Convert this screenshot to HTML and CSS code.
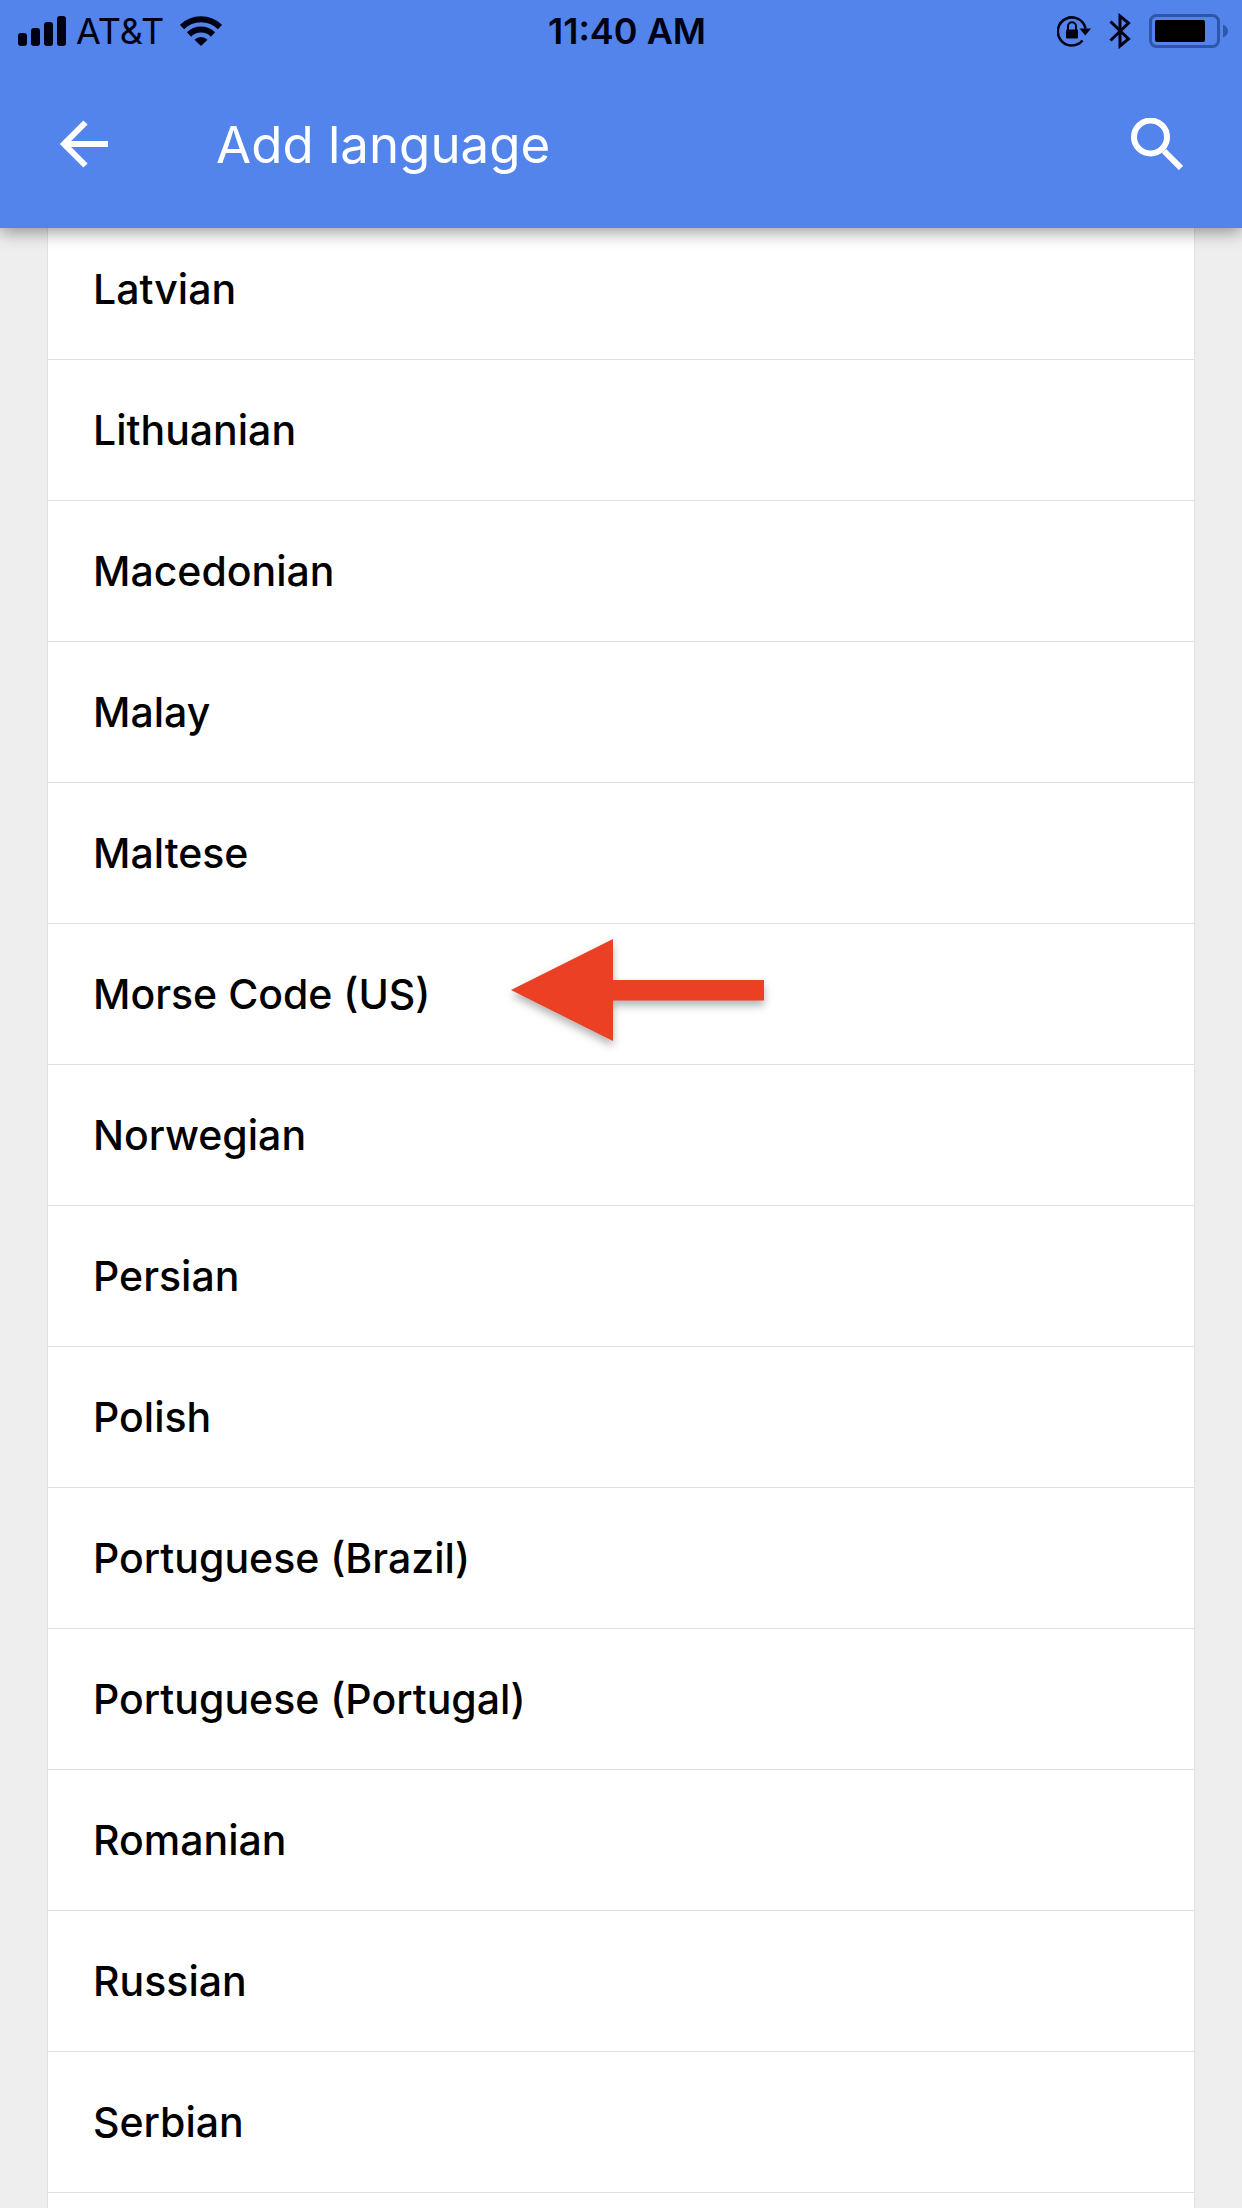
FILE: index.html
```html
<!DOCTYPE html>
<html lang="en">
<head>
<meta charset="utf-8">
<meta name="viewport" content="width=device-width, initial-scale=1">
<title>Add language</title>
<link rel="stylesheet" href="styles.css">
</head>
<body>
<div class="screen">
  <header class="header">
    <div class="status">
      <div class="status-left">
        <svg class="signal" width="48" height="30" viewBox="0 0 48 30" role="img" aria-label="Signal strength">
          <rect x="0" y="17" width="9" height="13" rx="3"/>
          <rect x="13" y="12" width="9" height="18" rx="3"/>
          <rect x="26" y="6" width="9" height="24" rx="3"/>
          <rect x="39" y="0" width="9" height="30" rx="3"/>
        </svg>
        <span class="carrier">AT&amp;T</span>
        <svg class="wifi" width="42" height="30" viewBox="0 0 42 30" role="img" aria-label="Wi-Fi">
          <g fill="none" stroke="#000014" stroke-width="6">
            <path d="M2 11A27 27 0 0 1 40 11"/>
            <path d="M9 18.5A17.2 17.2 0 0 1 33 18.5"/>
          </g>
          <path d="M14.500 23.700A9.200 9.200 0 0 1 27.500 23.700L21 30Z"/>
        </svg>
      </div>
      <span class="time">11:40 AM</span>
      <div class="status-right">
        <svg class="lock" width="34" height="32" viewBox="0 0 34 32" role="img" aria-label="Rotation locked">
          <path d="M25.500 25.500A14 14 0 1 1 28.500 13.500" fill="none" stroke="#000014" stroke-width="2.600"/>
          <path d="M22.500 13.500H34L28.300 20.500Z"/>
          <rect x="9" y="14.500" width="12" height="9" rx="1"/>
          <path d="M11 15V11.200a4 4 0 0 1 8 0V15" fill="none" stroke="#000014" stroke-width="2"/>
        </svg>
        <svg class="bluetooth" width="22" height="36" viewBox="0 0 22 36" role="img" aria-label="Bluetooth">
          <path d="M1.500 8.500L19.500 26L11 33V3L19.500 10L1.500 27.500" fill="none" stroke="#000014" stroke-width="3"/>
        </svg>
        <svg class="battery" width="79" height="34" viewBox="0 0 79 34" role="img" aria-label="Battery">
          <rect x="1.500" y="1.500" width="68" height="31" rx="6" fill="none" stroke="#2f57a8" stroke-width="3"/>
          <path d="M74 10.500Q79 13 79 17T74 23.500Z" fill="#2f57a8"/>
          <rect x="6" y="6" width="50" height="22" rx="2" fill="#000"/>
        </svg>
      </div>
    </div>
    <div class="toolbar">
      <button class="icon-button" type="button" aria-label="Back">
        <svg width="48" height="48" viewBox="0 0 48 48" fill="none" stroke="#fff" stroke-width="6">
          <path d="M48 24H5M25.500 2.500L4 24L25.500 45.500"/>
        </svg>
      </button>
      <h1 class="title">Add language</h1>
      <button class="icon-button" type="button" aria-label="Search">
        <svg width="52" height="52" viewBox="0 0 52 52" fill="none" stroke="#fff" stroke-width="6">
          <circle cx="19.500" cy="19" r="16.500"/>
          <path d="M33 33L50 50"/>
        </svg>
      </button>
    </div>
  </header>
  <main class="content">
    <ul class="languages">
      <li><button class="language" type="button">Latvian</button></li>
      <li><button class="language" type="button">Lithuanian</button></li>
      <li><button class="language" type="button">Macedonian</button></li>
      <li><button class="language" type="button">Malay</button></li>
      <li><button class="language" type="button">Maltese</button></li>
      <li class="marked">
        <button class="language" type="button">Morse Code (US)</button>
        <svg class="pointer" width="254" height="104" viewBox="0 0 254 104" aria-hidden="true">
          <path d="M0 52L102 1V42H253V62.500H102V103Z" fill="#ec4024"/>
        </svg>
      </li>
      <li><button class="language" type="button">Norwegian</button></li>
      <li><button class="language" type="button">Persian</button></li>
      <li><button class="language" type="button">Polish</button></li>
      <li><button class="language" type="button">Portuguese (Brazil)</button></li>
      <li><button class="language" type="button">Portuguese (Portugal)</button></li>
      <li><button class="language" type="button">Romanian</button></li>
      <li><button class="language" type="button">Russian</button></li>
      <li><button class="language" type="button">Serbian</button></li>
    </ul>
  </main>
</div>
</body>
</html>
```
FILE: styles.css
```css
* {
  box-sizing: border-box;
}

body {
  margin: 0;
  background: #eee;
  color: #000;
  font-family: Inter, Roboto, "Liberation Sans", sans-serif;
}

button {
  margin: 0;
  padding: 0;
  border: 0;
  background: none;
  color: inherit;
  font: inherit;
  cursor: pointer;
}

svg {
  display: block;
  flex: none;
}

.screen {
  display: flex;
  flex-direction: column;
  height: 100vh;
  overflow: hidden;
}

.header {
  position: relative;
  z-index: 1;
  flex: none;
  background: #5284ec;
  box-shadow: 0 4px 16px rgba(0, 0, 0, 0.4);
}

.status {
  display: grid;
  grid-template-columns: 1fr auto 1fr;
  align-items: center;
  height: 62px;
  padding: 0 14px 0 18px;
  color: #000014;
  fill: #000014;
  font-size: 36px;
}

.status-left,
.status-right {
  display: flex;
  align-items: center;
}

.carrier {
  margin: 0 16px 0 10px;
}

.time {
  padding-left: 8px;
  font-weight: 600;
}

.status-right {
  justify-content: flex-end;
  gap: 18px;
}

.toolbar {
  display: flex;
  align-items: center;
  height: 166px;
  padding: 0 59px 2px 60px;
}

.icon-button {
  flex: none;
}

.title {
  flex: 1;
  margin: 0 0 0 108px;
  color: #fff;
  font-size: 51px;
  font-weight: 400;
}

.content {
  display: flex;
  flex: 1;
  min-height: 0;
  padding: 0 47px;
}

.languages {
  flex: 1;
  margin: -9px 0 0;
  padding: 0;
  border: solid #e0e0e0;
  border-width: 0 1px;
  background: #fff;
  list-style: none;
}

.language {
  display: block;
  width: 100%;
  height: 141px;
  padding: 0 45px;
  border-bottom: 1px solid #e0e0e0;
  font-size: 41px;
  font-weight: 500;
  text-align: left;
}

.marked {
  position: relative;
}

.pointer {
  position: absolute;
  top: 14px;
  left: 463px;
  overflow: visible;
  filter: drop-shadow(0 5px 4px rgba(0, 0, 0, 0.3));
}
```
